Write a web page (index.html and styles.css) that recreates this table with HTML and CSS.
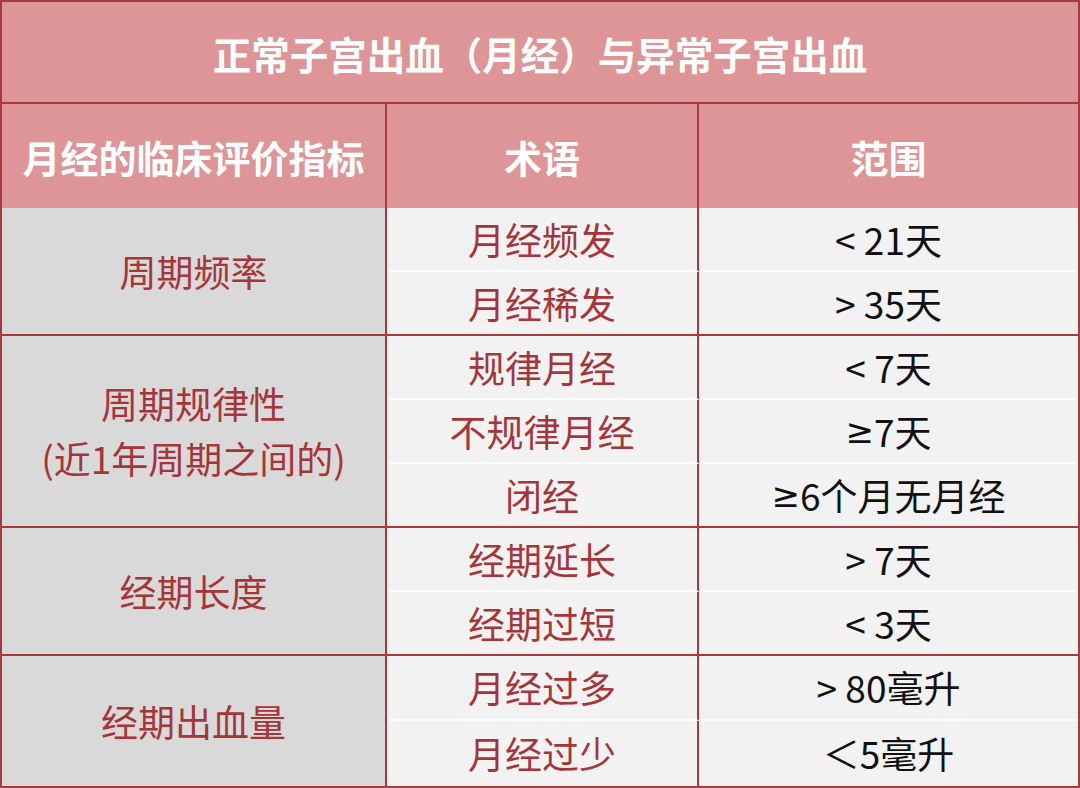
FILE: index.html
```html
<!DOCTYPE html>
<html lang="zh-CN">
<head>
<meta charset="utf-8">
<title>正常子宫出血（月经）与异常子宫出血</title>
<link rel="stylesheet" href="styles.css">
</head>
<body>
<div class="table">
  <div class="cell title">正常子宫出血（月经）与异常子宫出血</div>

  <div class="cell head c1">月经的临床评价指标</div>
  <div class="cell head c2">术语</div>
  <div class="cell head c3">范围</div>

  <div class="cell group g2">周期频率</div>
  <div class="cell term sub">月经频发</div>
  <div class="cell range sub">&lt; 21天</div>
  <div class="cell term end">月经稀发</div>
  <div class="cell range end">&gt; 35天</div>

  <div class="cell group g3">周期规律性<br>(近1年周期之间的)</div>
  <div class="cell term sub">规律月经</div>
  <div class="cell range sub">&lt; 7天</div>
  <div class="cell term sub">不规律月经</div>
  <div class="cell range sub"><span class="sym">≥</span>7天</div>
  <div class="cell term end">闭经</div>
  <div class="cell range end"><span class="sym">≥</span>6个月无月经</div>

  <div class="cell group g2">经期长度</div>
  <div class="cell term sub">经期延长</div>
  <div class="cell range sub">&gt; 7天</div>
  <div class="cell term end">经期过短</div>
  <div class="cell range end">&lt; 3天</div>

  <div class="cell group g2 last">经期出血量</div>
  <div class="cell term sub">月经过多</div>
  <div class="cell range sub">&gt; 80毫升</div>
  <div class="cell term last">月经过少</div>
  <div class="cell range last">＜5毫升</div>
</div>
</body>
</html>
```

FILE: styles.css
```css
* { box-sizing: border-box; }

html, body {
  margin: 0;
  padding: 0;
  background: #ffffff;
}

body {
  font-family: "Noto Sans CJK SC", "Noto Sans", sans-serif;
}

.table {
  width: 1080px;
  height: 788px;
  border: 2px solid #a9393d;
  display: grid;
  grid-template-columns: 385px 312px 379px;
  grid-template-rows: 102px 104px repeat(7, 64px) 65px 65px;
}

.cell {
  display: flex;
  align-items: center;
  justify-content: center;
  text-align: center;
  font-size: 37px;
  line-height: 55px;
}

.title {
  grid-column: 1 / 4;
  background: #dd9597;
  color: #ffffff;
  font-weight: 700;
  font-size: 38.5px;
  border-bottom: 2px solid #a9393d;
  padding-top: 2px;
}

.head {
  background: #dd9597;
  color: #ffffff;
  font-weight: 700;
  font-size: 38px;
}

.head.c1, .head.c2 {
  border-right: 2px solid #a9393d;
}

.group {
  grid-column: 1;
  background: #d9d9d9;
  color: #a6353a;
  border-right: 2px solid #a9393d;
  border-bottom: 2px solid #a9393d;
}

.group.g2 { grid-row: span 2; }
.group.g3 { grid-row: span 3; }
.group.last { border-bottom: none; }

.term {
  grid-column: 2;
  background: #f2f2f2;
  color: #a6353a;
  border-right: 2px solid #a9393d;
}

.range {
  grid-column: 3;
  background: #f2f2f2;
  color: #111111;
}

.sym {
  font-family: "DejaVu Sans", sans-serif;
  font-size: 34px;
}

.sub { border-bottom: 2px solid #ffffff; }
.end { border-bottom: 2px solid #a9393d; }
```
